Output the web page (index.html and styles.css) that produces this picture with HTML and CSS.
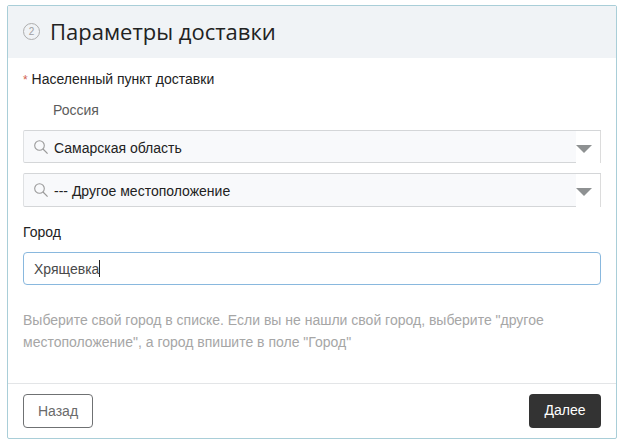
FILE: index.html
```html
<!DOCTYPE html>
<html lang="ru">
<head>
<meta charset="utf-8">
<title>Параметры доставки</title>
<link rel="stylesheet" href="styles.css">
</head>
<body>
<section class="panel">
  <header class="panel-head">
    <span class="step">2</span>
    <h2 class="title">Параметры доставки</h2>
  </header>
  <div class="panel-body">
    <div class="label-req"><span class="star">*</span> Населенный пункт доставки</div>
    <div class="country">Россия</div>
    <div class="select">
      <svg class="search" width="16" height="16" viewBox="0 0 16 16"><circle cx="6.5" cy="6.5" r="4.8" fill="none" stroke="#9a9a9a" stroke-width="1.1"/><path d="M10 10l4.6 4.6" stroke="#9a9a9a" stroke-width="1.2" fill="none"/></svg>
      <span class="select-text">Самарская область</span>
      <span class="arrow-box"><span class="arrow"></span></span>
    </div>
    <div class="select second">
      <svg class="search" width="16" height="16" viewBox="0 0 16 16"><circle cx="6.5" cy="6.5" r="4.8" fill="none" stroke="#9a9a9a" stroke-width="1.1"/><path d="M10 10l4.6 4.6" stroke="#9a9a9a" stroke-width="1.2" fill="none"/></svg>
      <span class="select-text">--- Другое местоположение</span>
      <span class="arrow-box"><span class="arrow"></span></span>
    </div>
    <div class="label-city">Город</div>
    <div class="input"><span>Хрящевка</span><span class="caret"></span></div>
    <p class="hint">Выберите свой город в списке. Если вы не нашли свой город, выберите "другое местоположение", а город впишите в поле "Город"</p>
  </div>
  <footer class="panel-foot">
    <span class="btn btn-back">Назад</span>
    <span class="btn btn-next">Далее</span>
  </footer>
</section>
</body>
</html>
```
FILE: styles.css
```css
* { box-sizing: border-box; }
html, body { margin: 0; background: #fff; }
body {
  width: 622px;
  height: 442px;
  padding: 5px 5px 0 7px;
  font-family: "Liberation Sans", Arial, sans-serif;
  font-size: 14px;
  color: #222;
  overflow: hidden;
}
.panel {
  width: 610px;
  height: 434px;
  border: 1px solid #a9ced8;
  border-radius: 2px;
  display: flex;
  flex-direction: column;
}
.panel-head {
  height: 52px;
  flex: none;
  background: #f0f3f6;
  display: flex;
  align-items: center;
  padding: 0 0 2px 15px;
}
.step {
  width: 17px;
  height: 17px;
  border: 1px solid #adadad;
  border-radius: 50%;
  color: #a0a0a0;
  font-size: 10px;
  line-height: 15px;
  text-align: center;
  margin-right: 10px;
}
.title {
  margin: 0;
  font-family: "Open Sans", sans-serif;
  font-weight: 400;
  font-size: 22px;
  line-height: 30px;
  color: #222;
}
.panel-body { flex: 1; padding: 13px 15px 0; }
.label-req { line-height: 16px; color: #222; }
.star { color: #d2604f; font-size: 12px; line-height: 0; }
.country { line-height: 16px; margin: 15px 0 0 30px; color: #5c5c5c; }
.select {
  margin-top: 12px;
  height: 33px;
  width: 578px;
  display: flex;
  align-items: center;
  background: #f8f9fb;
  border-top: 1px solid #d4d6d8;
  border-left: 1px solid #dfe1e3;
  border-bottom: 1px solid #d4d6d8;
  border-radius: 2px 0 0 2px;
  position: relative;
  padding: 2px 0 0 9px;
}
.second { margin-top: 10px; height: 34px; padding-top: 1px; }
.search { flex: none; margin-top: -1px; margin-right: 5px; }
.select-text { color: #222; }
.arrow-box {
  position: absolute;
  right: 0;
  top: 0;
  bottom: -1px;
  width: 25px;
  background: #fff;
  border-right: 1px solid #dcdcdc;
}
.arrow {
  position: absolute;
  left: 0;
  top: 14px;
  width: 0;
  height: 0;
  border-left: 8px solid transparent;
  border-right: 8px solid transparent;
  border-top: 8px solid #8e9192;
}
.label-city { margin-top: 17px; line-height: 16px; color: #222; }
.input {
  margin-top: 12px;
  width: 578px;
  height: 33px;
  border: 1px solid #89b8de;
  border-radius: 4px;
  padding: 0 10px;
  display: flex;
  align-items: center;
  color: #4a4a4a;
}
.caret { width: 1px; height: 17px; background: #222; }
.hint {
  margin: 24px 0 0;
  line-height: 22px;
  color: #a6a6a6;
  width: 560px;
}
.panel-foot {
  flex: none;
  height: 55px;
  border-top: 1px solid #e3e5e7;
  padding: 10px 15px 0;
  display: flex;
  justify-content: space-between;
  align-items: flex-start;
}
.btn {
  height: 34px;
  line-height: 32px;
  text-align: center;
  border-radius: 4px;
  font-size: 14px;
}
.btn-back { width: 70px; border: 1px solid #6f7173; color: #6a6a6a; }
.btn-next { width: 72px; background: #333; color: #fff; }
```
